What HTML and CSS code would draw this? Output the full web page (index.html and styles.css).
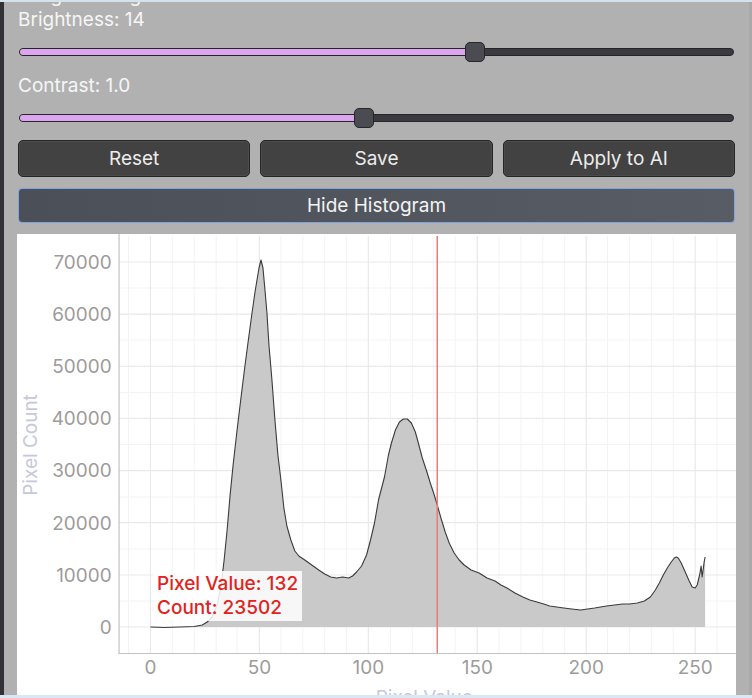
FILE: index.html
```html
<!DOCTYPE html>
<html lang="en">
<head>
<meta charset="UTF-8">
<meta name="viewport" content="width=device-width, initial-scale=1.0">
<title>Image Settings</title>
<link rel="stylesheet" href="styles.css">
</head>
<body>
<div class="window">
    <div class="main">
        <div class="edge"></div>
        <div class="panel">
            <div class="title">Image Settings</div>

            <div class="label">Brightness: 14</div>
            <div class="slider" style="--p: 0.64">
                <div class="track"><div class="fill"></div></div>
                <div class="thumb"></div>
            </div>

            <div class="label">Contrast: 1.0</div>
            <div class="slider" style="--p: 0.481">
                <div class="track"><div class="fill"></div></div>
                <div class="thumb"></div>
            </div>

            <div class="buttons">
                <button class="btn">Reset</button>
                <button class="btn">Save</button>
                <button class="btn">Apply to AI</button>
            </div>
            <button class="toggle">Hide Histogram</button>

            <div class="chart">
                <svg class="plot" viewBox="17 234 722 461" preserveAspectRatio="none">
                    <!-- grid -->
                    <path class="grid-minor" d="M129 236V653M173 236V653M195 236V653M217 236V653M238 236V653M282 236V653M304 236V653M326 236V653M348 236V653M392 236V653M414 236V653M435 236V653M457 236V653M501 236V653M523 236V653M545 236V653M567 236V653M610 236V653M632 236V653M654 236V653M676 236V653M720 236V653M119 601H739M119 549H739M119 497H739M119 444.5H739M119 392.5H739M119 340H739M119 288H739"/>
                    <path class="grid-major" d="M151 236V653M260.4 236V653M369.8 236V653M479.2 236V653M588.6 236V653M698 236V653M119 627H739M119 575H739M119 522.7H739M119 470.6H739M119 418.4H739M119 366.3H739M119 314.2H739M119 262H739"/>

                    <!-- histogram -->
                    <path class="area" d="M151 627L165 627.5L180 627L195 626.5L203 625L208 622L213 617L218 605L222 585L225 560L228 530L231 495L234 465L238 430L242 397L246 365L250 335L253 313L256 292L258 280L260 268L262 260L264 268L266 290L268 313L270 345L273 380L276 420L279 455L282 480L285 508L288 526L292 540L296 551L300 556L306 560L313 565L320 570L326 574L332 577L338 578L344 577L350 578L354 576L358 572L363 566L368 555L372 540L376 523L380 500L386 477L390 455L393 443L397 430L401 422L405 419L409 419L413 423L417 432L420 443L424 458L428 470L432 483L436 495L439 505L443 519L447 532L451 543L456 553L461 560L466 565L473 570L481 573L489 578L497 581L503 585L509 588L517 593L525 597L532 600L539 602L546 604L552 606L559 607L566 608L574 609L583 610L590 609L597 608L603 607L609 606L617 605L625 604L632 604L640 603L647 601L653 597L658 590L662 583L666 575L670 568L674 562L677 558L679 557L681 558L684 563L688 572L692 581L695 587L698 588L700 585L702 577L703 572L704 566L705 577L706 570L707 562L708 557L708 627Z"/>
                    <path class="curve" d="M151 627L165 627.5L180 627L195 626.5L203 625L208 622L213 617L218 605L222 585L225 560L228 530L231 495L234 465L238 430L242 397L246 365L250 335L253 313L256 292L258 280L260 268L262 260L264 268L266 290L268 313L270 345L273 380L276 420L279 455L282 480L285 508L288 526L292 540L296 551L300 556L306 560L313 565L320 570L326 574L332 577L338 578L344 577L350 578L354 576L358 572L363 566L368 555L372 540L376 523L380 500L386 477L390 455L393 443L397 430L401 422L405 419L409 419L413 423L417 432L420 443L424 458L428 470L432 483L436 495L439 505L443 519L447 532L451 543L456 553L461 560L466 565L473 570L481 573L489 578L497 581L503 585L509 588L517 593L525 597L532 600L539 602L546 604L552 606L559 607L566 608L574 609L583 610L590 609L597 608L603 607L609 606L617 605L625 604L632 604L640 603L647 601L653 597L658 590L662 583L666 575L670 568L674 562L677 558L679 557L681 558L684 563L688 572L692 581L695 587L698 588L700 585L702 577L703 572L704 566L705 577L706 570L707 562L708 557"/>

                    <!-- axes -->
                    <path class="axis" d="M119.5 234V653.5H739"/>
                    <line class="marker" x1="439" y1="236" x2="439" y2="653"/>

                    <g class="ticks-y">
                        <text x="112" y="269">70000</text>
                        <text x="112" y="321">60000</text>
                        <text x="112" y="373">50000</text>
                        <text x="112" y="425">40000</text>
                        <text x="112" y="477">30000</text>
                        <text x="112" y="530">20000</text>
                        <text x="112" y="582">10000</text>
                        <text x="112" y="634">0</text>
                    </g>
                    <g class="ticks-x">
                        <text x="151" y="674">0</text>
                        <text x="260.4" y="674">50</text>
                        <text x="369.8" y="674">100</text>
                        <text x="479.2" y="674">150</text>
                        <text x="588.6" y="674">200</text>
                        <text x="698" y="674">250</text>
                    </g>
                    <text class="axis-title" x="37" y="445" transform="rotate(-90 37 445)">Pixel Count</text>
                    <text class="axis-title" x="426" y="704">Pixel Value</text>
                </svg>
                <div class="tooltip">Pixel Value: 132<br>Count: 23502</div>
            </div>
        </div>
    </div>
</div>
</body>
</html>
```

FILE: styles.css
```css
html, body {
    margin: 0;
    height: 100%;
    overflow: hidden;
}
body {
    background: #b1b1b1;
    font-family: Inter, "Liberation Sans", sans-serif;
}
.window {
    height: 698px;
    display: flex;
    flex-direction: column;
    border-top: 2px solid #d4e2ec;
    border-bottom: 3px solid #dbe7f3;
    box-sizing: border-box;
}
.main {
    flex: 1;
    display: flex;
    min-height: 0;
}
.edge {
    width: 4px;
    background: #323236;
}
.panel {
    flex: 1;
    display: flex;
    flex-direction: column;
    padding: 0 13px;
    overflow: hidden;
    border-right: 3px solid #a9a9a9;
}
.title {
    height: 20px;
    margin-top: -16px;
    font-size: 19px;
    line-height: 20px;
    color: #f4f4f4;
    padding-left: 1px;
}
.label {
    height: 20px;
    margin-top: 4px;
    font-size: 19px;
    line-height: 20px;
    color: #f6f6f6;
    padding-left: 1px;
}
.label + .slider {
    margin-top: 12px;
}
.slider + .label {
    margin-top: 14px;
}
.slider {
    position: relative;
    height: 20px;
    display: flex;
    align-items: center;
    padding: 0 2px 0 2px;
}
.track {
    flex: 1;
    height: 8px;
    box-sizing: border-box;
    border: 1px solid #26262a;
    border-radius: 4px;
    background: #3a3a3f;
    display: flex;
    overflow: hidden;
}
.fill {
    width: calc(var(--p) * (100% - 20px) + 10px);
    background: #dba6ef;
}
.thumb {
    position: absolute;
    top: 0;
    left: calc(var(--p) * (100% - 20px) + 1px);
    width: 20px;
    height: 20px;
    box-sizing: border-box;
    border: 1.5px solid #27272b;
    border-radius: 5px;
    background: #4b4b52;
}
.buttons {
    display: grid;
    grid-template-columns: 1fr 1fr 1fr;
    gap: 10px;
    margin: 12px 1px 0;
    height: 37px;
    flex-shrink: 0;
}
.btn {
    font-family: Inter, "Liberation Sans", sans-serif;
    font-size: 19px;
    color: #ececec;
    background: #424242;
    border: 1px solid #252525;
    border-radius: 5px;
    box-shadow: inset 0 0 0 1px #4c4c4c;
}
.toggle {
    margin: 11px 1px 0;
    height: 35px;
    flex-shrink: 0;
    font-family: Inter, "Liberation Sans", sans-serif;
    font-size: 19px;
    color: #f3f3f3;
    background: linear-gradient(to right, #4b5058, #585c65);
    border: 1.5px solid #7fa3e2;
    border-radius: 4px;
}
.chart {
    flex: 1;
    margin-top: 11px;
    position: relative;
    background: #fff;
}
.plot {
    display: block;
    width: 100%;
    height: 100%;
}
.grid-minor {
    stroke: #f3f3f3;
    stroke-width: 1;
    fill: none;
}
.grid-major {
    stroke: #e9e9e9;
    stroke-width: 1.2;
    fill: none;
}
.area {
    fill: #c9c9c9;
}
.curve {
    fill: none;
    stroke: #3a3a3a;
    stroke-width: 1.1;
    stroke-linejoin: round;
}
.axis {
    fill: none;
    stroke: #c2c2c2;
    stroke-width: 1.2;
}
.marker {
    stroke: #ee7a7a;
    stroke-width: 1.5;
}
.ticks-y text, .ticks-x text {
    font-family: Inter, "Liberation Sans", sans-serif;
    font-size: 19px;
    fill: #9c9c9c;
}
.ticks-y text {
    text-anchor: end;
}
.ticks-x text {
    text-anchor: middle;
}
.axis-title {
    font-family: Inter, "Liberation Sans", sans-serif;
    font-size: 19px;
    fill: #c6c9db;
    text-anchor: middle;
}
.tooltip {
    position: absolute;
    left: 136px;
    top: 337px;
    padding: 1px 4px;
    background: rgba(255, 255, 255, 0.85);
    color: #e2231c;
    font-size: 19px;
    font-weight: 500;
    line-height: 24px;
    white-space: nowrap;
}
```
